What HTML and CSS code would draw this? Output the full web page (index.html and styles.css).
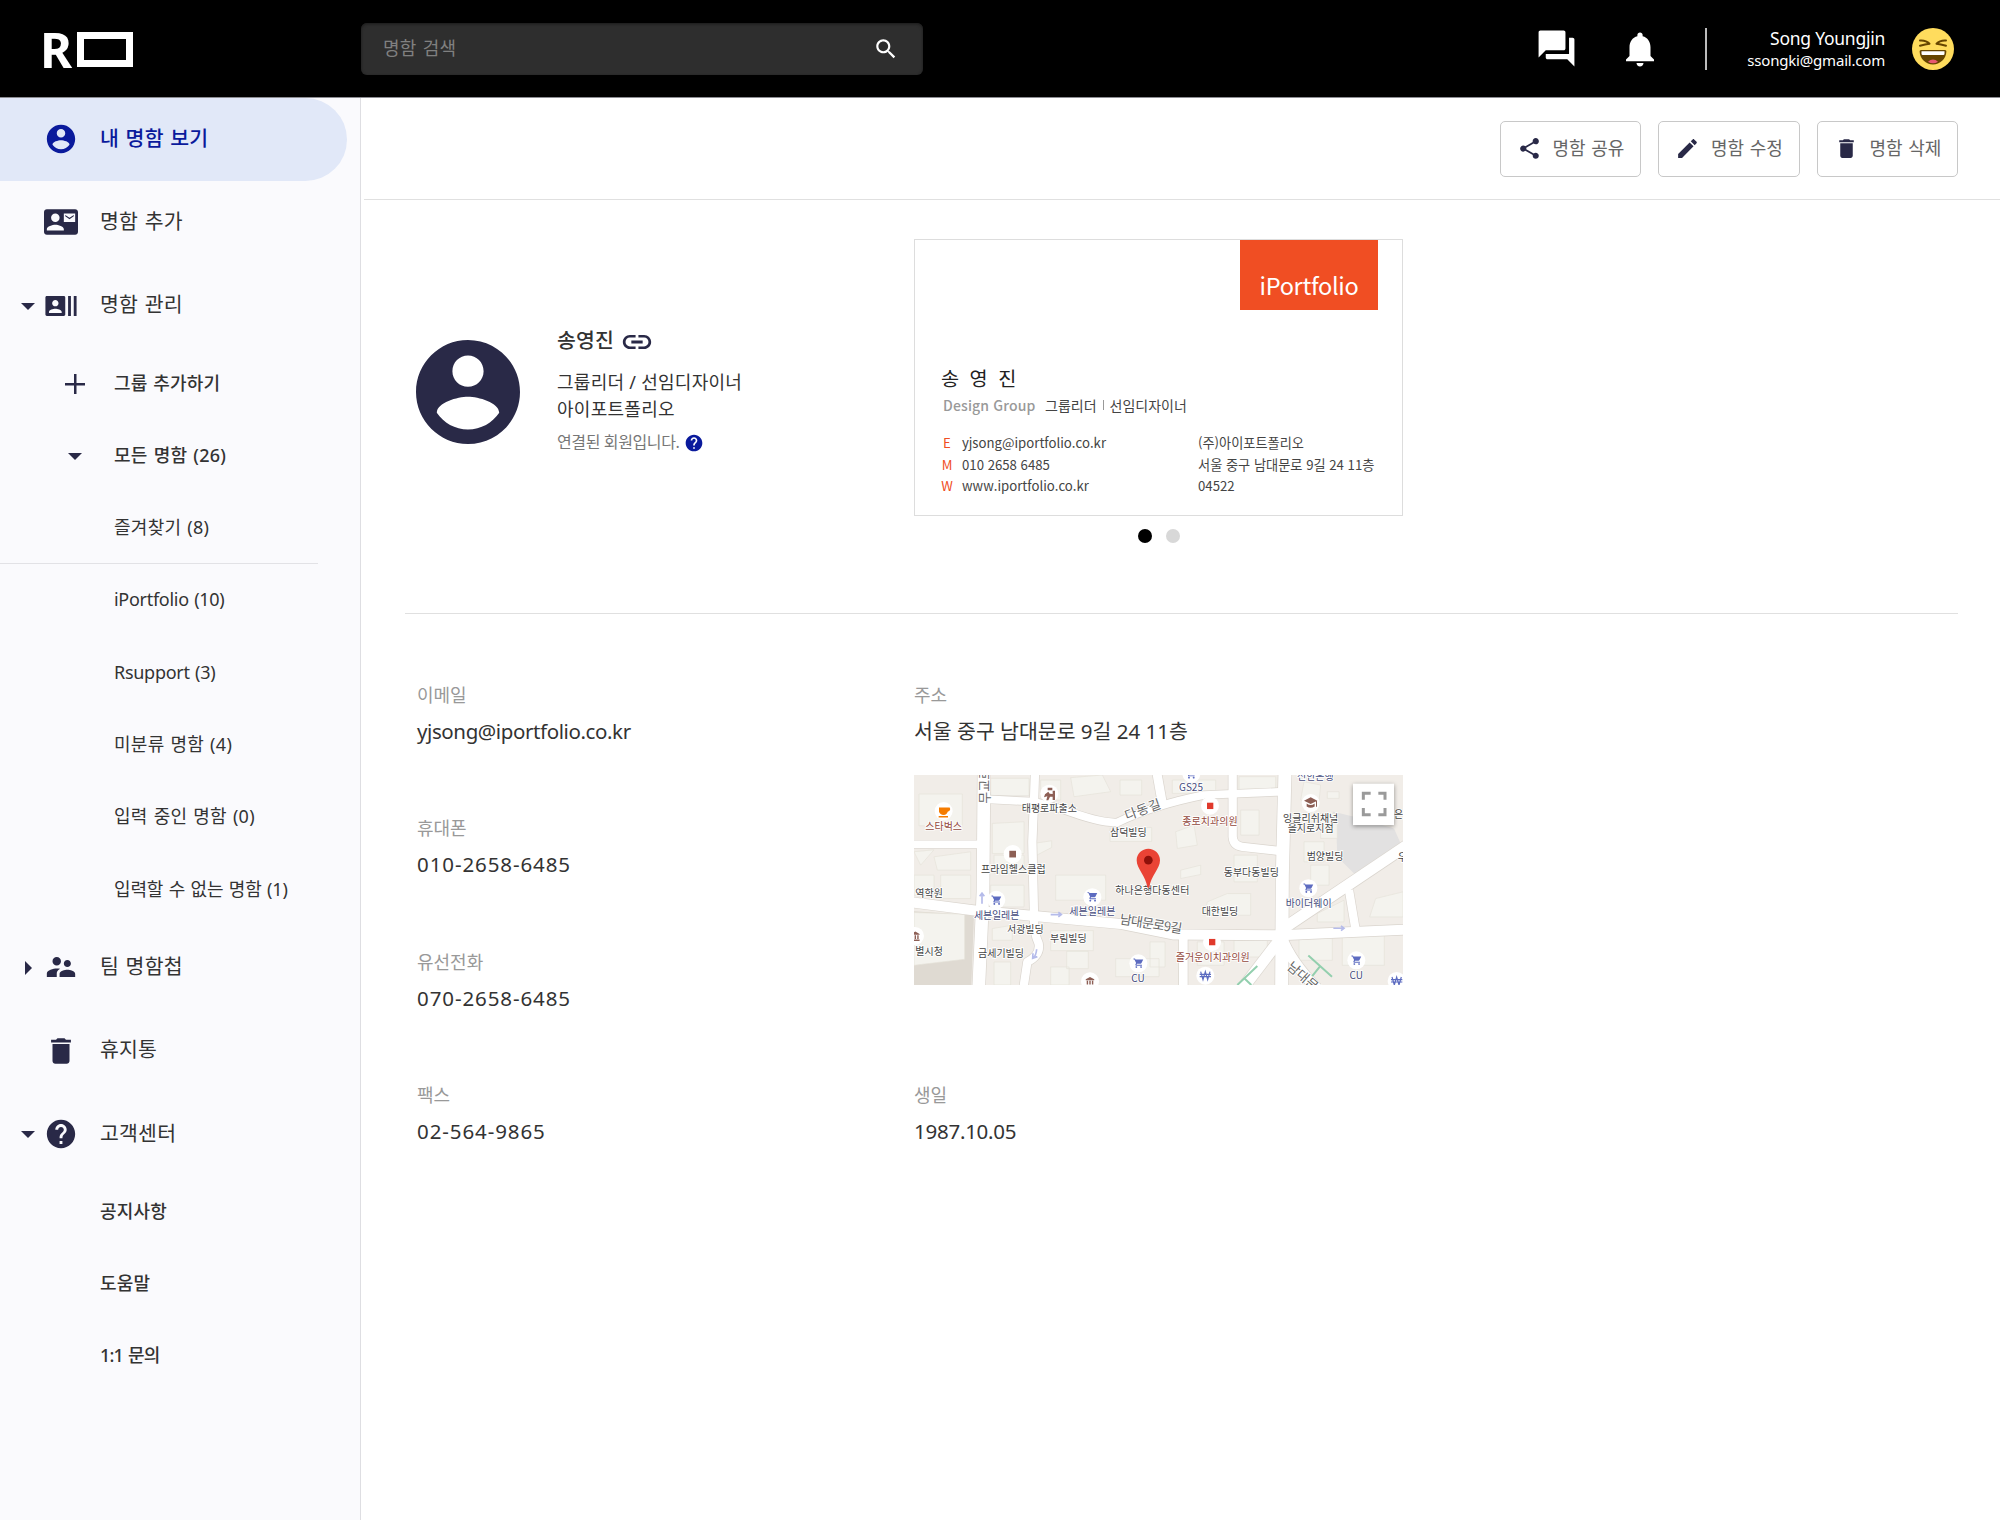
FILE: index.html
```html
<!DOCTYPE html>
<html lang="ko">
<head>
<meta charset="utf-8">
<title>내 명함 보기</title>
<link rel="stylesheet" href="styles.css">
</head>
<body>
<svg class="defs" width="0" height="0">
  <symbol id="i-account" viewBox="0 0 24 24"><path d="M12 2C6.48 2 2 6.48 2 12s4.480 10 10 10 10-4.480 10-10S17.520 2 12 2zm0 3c1.660 0 3 1.340 3 3s-1.340 3-3 3-3-1.340-3-3 1.340-3 3-3zm0 14.200c-2.500 0-4.710-1.280-6-3.220.03-1.990 4-3.080 6-3.080 1.990 0 5.970 1.090 6 3.080-1.290 1.940-3.500 3.220-6 3.220z"/></symbol>
  <symbol id="i-contact-mail" viewBox="0 0 24 24"><path d="M21 8V7l-3 2-3-2v1l3 2 3-2zm1-5H2C.9 3 0 3.900 0 5v14c0 1.100.9 2 2 2h20c1.100 0 1.990-.9 1.990-2L24 5c0-1.100-.9-2-2-2zM8 6c1.660 0 3 1.340 3 3s-1.340 3-3 3-3-1.340-3-3 1.340-3 3-3zm6 12H2v-1c0-2 4-3.100 6-3.100s6 1.100 6 3.100v1zm8-6h-8V6h8v6z"/></symbol>
  <symbol id="i-recent" viewBox="0 0 24 24"><path d="M21 5v14h2V5h-2zm-4 14h2V5h-2v14zM14 5H2c-.55 0-1 .45-1 1v12c0 .55.45 1 1 1h12c.55 0 1-.45 1-1V6c0-.55-.45-1-1-1zM8 7.750c1.240 0 2.250 1.010 2.250 2.250S9.240 12.250 8 12.250 5.750 11.240 5.750 10 6.760 7.750 8 7.750zM12.500 17h-9v-.75c0-1.500 3-2.250 4.500-2.250s4.500.75 4.500 2.250V17z"/></symbol>
  <symbol id="i-group" viewBox="0 0 24 24"><path d="M16.500 12c1.380 0 2.490-1.120 2.490-2.500S17.880 7 16.500 7C15.120 7 14 8.120 14 9.500s1.120 2.500 2.500 2.500zM9 11c1.660 0 2.990-1.340 2.990-3S10.660 5 9 5C7.340 5 6 6.340 6 8s1.340 3 3 3zm7.500 3c-1.830 0-5.500.92-5.500 2.750V19h11v-2.250c0-1.830-3.670-2.750-5.500-2.750zM9 13c-2.330 0-7 1.170-7 3.500V19h7v-2.250c0-.85.33-2.340 2.370-3.470C10.500 13.100 9.660 13 9 13z"/></symbol>
  <symbol id="i-trash" viewBox="0 0 24 24"><path d="M6 19c0 1.100.9 2 2 2h8c1.100 0 2-.9 2-2V7H6v12zM19 4h-3.500l-1-1h-5l-1 1H5v2h14V4z"/></symbol>
  <symbol id="i-help" viewBox="0 0 24 24"><path d="M12 2C6.480 2 2 6.480 2 12s4.480 10 10 10 10-4.480 10-10S17.520 2 12 2zm1 17h-2v-2h2v2zm2.070-7.750l-.9.920C13.450 12.900 13 13.500 13 15h-2v-.5c0-1.100.45-2.100 1.170-2.830l1.240-1.260c.37-.36.59-.86.59-1.410 0-1.100-.9-2-2-2s-2 .9-2 2H8c0-2.210 1.790-4 4-4s4 1.790 4 4c0 .88-.36 1.680-.93 2.250z"/></symbol>
  <symbol id="i-search" viewBox="0 0 24 24"><path d="M15.500 14h-.79l-.28-.27C15.410 12.590 16 11.110 16 9.500 16 5.910 13.090 3 9.500 3S3 5.910 3 9.500 5.910 16 9.500 16c1.610 0 3.090-.59 4.230-1.570l.27.28v.79l5 4.990L20.490 19l-4.990-5zm-6 0C7.010 14 5 11.990 5 9.500S7.010 5 9.500 5 14 7.010 14 9.500 11.990 14 9.500 14z"/></symbol>
  <symbol id="i-forum" viewBox="0 0 24 24"><path d="M21 6h-2v9H6v2c0 .55.45 1 1 1h11l4 4V7c0-.55-.45-1-1-1zm-4 6V3c0-.55-.45-1-1-1H3c-.55 0-1 .45-1 1v14l4-4h10c.55 0 1-.45 1-1z"/></symbol>
  <symbol id="i-bell" viewBox="0 0 24 24"><path d="M12 22c1.100 0 2-.9 2-2h-4c0 1.100.89 2 2 2zm6-6v-5c0-3.070-1.640-5.640-4.500-6.320V4c0-.83-.67-1.500-1.500-1.500s-1.500.67-1.500 1.500v.68C7.630 5.360 6 7.920 6 11v5l-2 2v1h16v-1l-2-2z"/></symbol>
  <symbol id="i-share" viewBox="0 0 24 24"><path d="M18 16.080c-.76 0-1.440.3-1.960.77L8.910 12.700c.05-.23.09-.46.09-.7s-.04-.47-.09-.7l7.050-4.110c.54.5 1.250.81 2.040.81 1.660 0 3-1.340 3-3s-1.340-3-3-3-3 1.340-3 3c0 .24.04.47.09.7L8.040 9.810C7.500 9.310 6.790 9 6 9c-1.660 0-3 1.340-3 3s1.340 3 3 3c.79 0 1.500-.31 2.040-.81l7.120 4.160c-.05.21-.08.43-.08.65 0 1.610 1.310 2.920 2.920 2.920s2.920-1.310 2.920-2.920-1.310-2.920-2.920-2.920z"/></symbol>
  <symbol id="i-edit" viewBox="0 0 24 24"><path d="M3 17.250V21h3.750L17.810 9.940l-3.750-3.750L3 17.250zM20.710 7.040c.39-.39.39-1.020 0-1.410l-2.340-2.340c-.39-.39-1.020-.39-1.410 0l-1.830 1.830 3.750 3.750 1.830-1.830z"/></symbol>
  <symbol id="i-link" viewBox="0 0 24 24"><path d="M3.900 12c0-1.710 1.390-3.100 3.100-3.100h4V7H7c-2.760 0-5 2.240-5 5s2.240 5 5 5h4v-1.900H7c-1.710 0-3.100-1.390-3.100-3.100zM8 13h8v-2H8v2zm9-6h-4v1.900h4c1.710 0 3.100 1.390 3.100 3.100s-1.390 3.100-3.100 3.100h-4V17h4c2.760 0 5-2.240 5-5s-2.240-5-5-5z"/></symbol>
  <symbol id="i-cart" viewBox="0 0 24 24"><path d="M7 18c-1.100 0-1.990.9-1.990 2S5.900 22 7 22s2-.9 2-2-.9-2-2-2zM1 2v2h2l3.600 7.590-1.350 2.450C4.500 15.400 5.500 17 7 17h12v-2H7.420l1.130-2h7.450c.75 0 1.410-.41 1.750-1.030L21.700 4H5.210l-.94-2H1zm16 16c-1.100 0-1.990.9-1.990 2s.89 2 1.990 2 2-.9 2-2-.9-2-2-2z"/></symbol>
  <symbol id="i-bank" viewBox="0 0 24 24"><path d="M12 2L3 7v2h18V7zM5 10h3v8H5zM10.500 10h3v8h-3zM16 10h3v8h-3zM3 19h18v3H3z"/></symbol>
</svg>

<header class="topbar">
  <a class="logo"><span class="logo-r">R</span><span class="logo-card"></span></a>
  <div class="search"><span>명함 검색</span><svg class="ic"><use href="#i-search"/></svg></div>
  <div class="top-actions">
    <svg class="ic forum"><use href="#i-forum"/></svg>
    <svg class="ic bell"><use href="#i-bell"/></svg>
    <span class="bar"></span>
    <div class="user"><span class="user-name">Song Youngjin</span><span class="user-mail">ssongki@gmail.com</span></div>
    <svg class="avatar" viewBox="0 0 42 42">
      <circle cx="21" cy="21" r="21" fill="#ffdc5d"/>
      <path d="M9 22h24q1.500 0 1.400 1.500C34 31 28 36.500 21 36.500S8 31 7.600 23.500Q7.500 22 9 22z" fill="#664500"/>
      <path d="M9.500 23.300h23v2.500q0 1.200-1.200 1.200H10.700q-1.200 0-1.200-1.200z" fill="#fff"/>
      <path d="M16 33.800q5-4.500 10 0-5 3-10 0z" fill="#e75a70"/>
      <path d="M8 12.500q6-.5 9.500 3.200-4 .3-9.500 2M34 12.500q-6-.5-9.500 3.200 4 .3 9.500 2" fill="none" stroke="#664500" stroke-width="2" stroke-linecap="round" stroke-linejoin="round"/>
    </svg>
  </div>
</header>

<div class="body">
  <nav class="sidebar">
    <a class="item active"><span class="caret"></span><svg class="ic s34"><use href="#i-account"/></svg><span class="label">내 명함 보기</span></a>
    <a class="item"><span class="caret"></span><svg class="ic s34"><use href="#i-contact-mail"/></svg><span class="label">명함 추가</span></a>
    <a class="item"><span class="caret down"></span><svg class="ic s34"><use href="#i-recent"/></svg><span class="label">명함 관리</span></a>
    <a class="sub strong"><span class="lead plus"></span><span class="label">그룹 추가하기</span></a>
    <a class="sub strong"><span class="lead"><span class="caret down"></span></span><span class="label wide">모든 명함 (26)</span></a>
    <a class="sub"><span class="lead"></span><span class="label wide">즐겨찾기 (8)</span></a>
    <hr class="side-rule">
    <a class="sub"><span class="lead"></span><span class="label tight">iPortfolio (10)</span></a>
    <a class="sub"><span class="lead"></span><span class="label tight">Rsupport (3)</span></a>
    <a class="sub"><span class="lead"></span><span class="label wide">미분류 명함 (4)</span></a>
    <a class="sub"><span class="lead"></span><span class="label wide">입력 중인 명함 (0)</span></a>
    <a class="sub"><span class="lead"></span><span class="label snug">입력할 수 없는 명함 (1)</span></a>
    <a class="item"><span class="caret right"></span><svg class="ic s34"><use href="#i-group"/></svg><span class="label">팀 명함첩</span></a>
    <a class="item"><span class="caret"></span><svg class="ic s34"><use href="#i-trash"/></svg><span class="label">휴지통</span></a>
    <a class="item"><span class="caret down"></span><svg class="ic s34"><use href="#i-help"/></svg><span class="label">고객센터</span></a>
    <a class="sub flat"><span class="label">공지사항</span></a>
    <a class="sub flat"><span class="label">도움말</span></a>
    <a class="sub flat"><span class="label narrow">1:1 문의</span></a>
  </nav>

  <main class="main">
    <div class="toolbar">
      <button class="btn"><svg class="ic"><use href="#i-share"/></svg><span>명함 공유</span></button>
      <button class="btn"><svg class="ic"><use href="#i-edit"/></svg><span>명함 수정</span></button>
      <button class="btn"><svg class="ic"><use href="#i-trash"/></svg><span>명함 삭제</span></button>
    </div>

    <section class="overview">
      <div class="profile">
        <svg class="ic portrait" viewBox="2 2 20 20"><path d="M12 2C6.480 2 2 6.480 2 12s4.480 10 10 10 10-4.480 10-10S17.520 2 12 2zm0 3c1.660 0 3 1.340 3 3s-1.340 3-3 3-3-1.340-3-3 1.340-3 3-3zm0 14.200c-2.500 0-4.710-1.280-6-3.220.03-1.990 4-3.080 6-3.080 1.990 0 5.970 1.090 6 3.080-1.290 1.940-3.500 3.220-6 3.220z"/></svg>
        <div class="who">
          <div class="who-name"><span>송영진</span><svg class="ic link"><use href="#i-link"/></svg></div>
          <div class="who-role">그룹리더 / 선임디자이너<br>아이포트폴리오</div>
          <div class="who-state"><span>연결된 회원입니다.</span><svg class="ic help"><use href="#i-help"/></svg></div>
        </div>
      </div>
      <div class="card-col">
        <article class="card">
          <div class="brand">iPortfolio</div>
          <div class="card-name">송 영 진</div>
          <div class="card-role"><span class="team">Design Group</span><span class="kr">그룹리더</span><i></i><span class="kr">선임디자이너</span></div>
          <div class="card-info">
            <b>E</b><span>yjsong@iportfolio.co.kr</span><span>(주)아이포트폴리오</span>
            <b>M</b><span>010 2658 6485</span><span>서울 중구 남대문로 9길 24 11층</span>
            <b>W</b><span>www.iportfolio.co.kr</span><span>04522</span>
          </div>
        </article>
        <div class="dots"><i class="on"></i><i></i></div>
      </div>
    </section>

    <section class="details">
      <div class="col">
        <div class="field"><span class="k">이메일</span><span class="v mail">yjsong@iportfolio.co.kr</span></div>
        <div class="field"><span class="k">휴대폰</span><span class="v phone">010-2658-6485</span></div>
        <div class="field"><span class="k">유선전화</span><span class="v phone">070-2658-6485</span></div>
        <div class="field"><span class="k">팩스</span><span class="v phone">02-564-9865</span></div>
      </div>
      <div class="col">
        <div class="field address"><span class="k">주소</span><span class="v">서울 중구 남대문로 9길 24 11층</span>
          <svg class="map" viewBox="0 0 1467 629" preserveAspectRatio="none">
            <rect width="1467" height="629" fill="#f1ede8"/>
            <path d="M0 408L180 420L172 629H0z" fill="#dfdad2"/>
            <path d="M1256 109L1320 125L1440 160L1460 205L1330 305L1270 245L1267 165z" fill="#e2e1e1"/>
            <g class="bld">
              <path d="M15 57h130v95H15zM0 412l152 5v135L0 570zM230 10h115v52H230zM380 15h60v60h-60zM470 8l95-8 25 50-110 15zM618 15h65v45h-65zM235 145l95-5v95h-95zM240 240h90v55h-90zM358 205l55-8v20l-48 25zM425 300h150v75H425zM588 160l125-3v42H588zM230 330h100v65H230zM60 245l110-15v55H70zM0 300h60v60H0zM80 300h90v70H80zM0 230l60-6L20 270zM410 466h128v60H410zM458 528h65v52h-65zM235 460l60-10v45h-60zM240 560h50v69h-50zM410 575h55v54h-55zM605 550h130v54H605zM775 15h130v40H775zM975 5h110v38H975zM980 105h55v75h-55zM785 170l55-20 10 60-60 10zM800 285l60-15v28l-60 12zM960 240h70v80h-70zM880 380l60-25h70v65H870zM708 500h45v75h-45zM850 500h80v70H850zM960 495h100v50H960zM1170 20l50 10-5 50-55-5zM1220 115h50v75h-50zM1170 200h60v60h-60zM1190 270h55v60h-55zM1240 50h35v20h-35zM1385 370l82-20v75h-100zM1285 480h126v90h-126zM1155 485h100v70h-100zM1210 415l80-40v65h-80z"/>
            </g>
            <g class="casing">
              <path d="M210-10L207 350L194 640" stroke-width="42"/><path d="M363-10L360 80L355 200L360 420Q358 470 374 505Q380 540 340 560L328 640" stroke-width="29"/>
              <path d="M225 73L360 80L450 104Q560 145 610 142Q720 90 870 60L1108 50" stroke-width="27"/><path d="M728-10L745 85" stroke-width="31"/>
              <path d="M-10 208H200" stroke-width="27"/><path d="M-10 381L200 408L360 422L620 446L780 478L1100 480L1480 463" stroke-width="34"/>
              <path d="M956-10V185Q958 212 985 215L1100 228" stroke-width="29"/><path d="M1113-10L1105 300L1103 640" stroke-width="43"/>
              <path d="M1115 455L1480 210" stroke-width="38"/><path d="M1305 345L1325 465" stroke-width="29"/><path d="M808 480V640" stroke-width="30"/>
              <path d="M1100 490L985 640" stroke-width="38"/><path d="M1100 480Q1130 560 1210 640" stroke-width="36"/>
            </g>
            <g class="road">
              <path d="M210-10L207 350L194 640" stroke-width="38"/><path d="M363-10L360 80L355 200L360 420Q358 470 374 505Q380 540 340 560L328 640" stroke-width="25"/>
              <path d="M225 73L360 80L450 104Q560 145 610 142Q720 90 870 60L1108 50" stroke-width="23"/><path d="M728-10L745 85" stroke-width="27"/>
              <path d="M-10 208H200" stroke-width="23"/><path d="M-10 381L200 408L360 422L620 446L780 478L1100 480L1480 463" stroke-width="30"/>
              <path d="M956-10V185Q958 212 985 215L1100 228" stroke-width="25"/><path d="M1113-10L1105 300L1103 640" stroke-width="39"/>
              <path d="M1115 455L1480 210" stroke-width="34"/><path d="M1305 345L1325 465" stroke-width="25"/><path d="M808 480V640" stroke-width="26"/>
              <path d="M1100 490L985 640" stroke-width="34"/><path d="M1100 480Q1130 560 1210 640" stroke-width="32"/>
            </g>
            <path d="M204 386v-32m-7 9l7-9 7 9M410 418h32m-9-7l9 7-9 7M368 522q-2 20-10 25m-1-13l-1 15 14-5M1258 459h32m-9-7l9 7-9 7" fill="none" stroke="#b5bbea" stroke-width="5"/>
            <path d="M970 629L1030 572M990 608L1012 629M1183 541L1254 604M1218 573L1194 603" fill="none" stroke="#93cfae" stroke-width="6"/>
            <g fill="#fff"><circle cx="89" cy="108" r="27"/><circle cx="406" cy="56" r="27"/><circle cx="296" cy="237" r="27"/><circle cx="247" cy="374" r="27"/><circle cx="535" cy="366" r="27"/><circle cx="3" cy="482" r="27"/><circle cx="673" cy="564" r="27"/><circle cx="528" cy="618" r="27"/><circle cx="832" cy="-4" r="27"/><circle cx="888" cy="92" r="27"/><circle cx="1190" cy="84" r="27"/><circle cx="1183" cy="339" r="27"/><circle cx="1327" cy="555" r="27"/><circle cx="894" cy="500" r="27"/><circle cx="874" cy="601" r="27"/><circle cx="1448" cy="617" r="27"/></g>
            <path d="M75 97h32q5 9-6 13-2 9-12 10-11-1-14-10zM74 123h28v4H74z" fill="#f57c00"/>
            <g fill="#8d5f55"><rect x="286" y="227" width="20" height="20"/><path d="M401 38h14v8h-14zM393 58l10-8 4 6 9 1V47h7v28h-7V65h-8l-5 11h-6l3-12-10 3z"/><path d="M1190 67l20 10-20 10-20-10zM1178 85q12 9 24 0v9q-12 8-24 0zM1206 78h3v17h-3z"/><use href="#i-bank" x="-13" y="466" width="34" height="34"/><use href="#i-bank" x="511" y="602" width="34" height="34"/></g>
            <g fill="#e0392b"><rect x="879" y="83" width="19" height="19"/><rect x="885" y="491" width="19" height="19"/></g>
            <g fill="#5c6bc0"><use href="#i-cart" x="230" y="358" width="36" height="34"/><use href="#i-cart" x="518" y="348" width="36" height="34"/><use href="#i-cart" x="656" y="547" width="36" height="34"/><use href="#i-cart" x="814" y="-20" width="36" height="34"/><use href="#i-cart" x="1166" y="322" width="36" height="34"/><use href="#i-cart" x="1310" y="538" width="36" height="34"/></g>
            <path class="won" d="M860 589l7 24 7-24 7 24 7-24M857 597h34M857 604h34M1434 605l7 24 7-24 7 24 7-24M1431 613h34M1431 620h34"/>
            <g class="place">
              <text x="406" y="112" textLength="166">태평로파출소</text><text x="643" y="183" textLength="110">삼덕빌딩</text><text x="298" y="294" textLength="194">프라임헬스클럽</text>
              <text class="from" x="4" y="365">역학원</text><text x="715" y="356" textLength="222">하나은행다동센터</text><text x="334" y="474" textLength="110">서광빌딩</text><text x="463" y="501" textLength="110">부림빌딩</text><text x="261" y="546" textLength="138">금세기빌딩</text>
              <text class="from" x="4" y="539">별시청</text><text x="1012" y="302" textLength="166">동부다동빌딩</text><text x="918" y="419" textLength="110">대한빌딩</text><text x="1233" y="255" textLength="110">범양빌딩</text>
              <text x="1190" y="141" textLength="166">잉글리쉬채널</text><text x="1190" y="171" textLength="138">을지로지점</text><text x="1454" y="130">은</text><text x="1465" y="257">우</text>
            </g>
            <g class="place food"><text x="89" y="166" textLength="110">스타벅스</text><text x="888" y="150" textLength="166">종로치과의원</text><text x="896" y="556" textLength="222">즐거운이치과의원</text></g>
            <g class="place shop"><text x="248" y="431" textLength="136">세븐일레븐</text><text x="535" y="420" textLength="138">세븐일레븐</text><text x="672" y="621">CU</text><text x="831" y="49">GS25</text><text x="1184" y="394" textLength="138">바이더웨이</text><text x="1327" y="611">CU</text><text x="1204" y="15" textLength="110">신한은행</text></g>
            <g class="street"><text transform="translate(638 136) rotate(-20)" textLength="112">다동길</text><text transform="translate(616 445) rotate(9)" textLength="188">남대문로9길</text><text transform="translate(1117 578) rotate(41)">남대문로</text><text transform="translate(224 86) rotate(-90)">무교로</text></g>
            <path d="M703 221c19 0 35 15 35 34 0 26-28 46-32 82h-6c-4-36-32-56-32-82 0-19 16-34 35-34z" fill="#ea4335"/><circle cx="703" cy="255" r="13" fill="#8e100a"/>
            <g class="fs"><rect x="1317" y="26" width="123" height="124" fill="#fff"/></g>
            <path d="M1348 74V55h22M1393 55h20v19M1413 99v20h-20M1370 119h-22V99" fill="none" stroke="#9a9a9a" stroke-width="9"/>
          </svg>
        </div>
        <div class="field"><span class="k">생일</span><span class="v date">1987.10.05</span></div>
      </div>
    </section>
  </main>
</div>
</body>
</html>
```
FILE: styles.css
```css
* { box-sizing: border-box; }
body {
  margin: 0; width: 2000px; height: 1520px; overflow: hidden; background: #fff; color: #333;
  font-family: "Noto Sans", "Noto Sans CJK KR", sans-serif;
  display: flex; flex-direction: column;
}
.defs { position: absolute; }
.ic { fill: #292947; display: block; flex: none; }

/* top bar */
.topbar { height: 98px; flex: none; background: #000; border-bottom: 1px solid #8c8c92; display: flex; align-items: center; padding: 0 46px 0 40px; color: #fff; }
.logo { display: flex; align-items: center; width: 321px; height: 36px; }
.logo-r { font: 700 49px/36px "Noto Sans"; width: 37px; }
.logo-card { width: 56px; height: 35px; border: 7px solid #fff; margin-top: 1px; }
.search { width: 562px; height: 52px; border-radius: 6px; background: #2e2e2e; box-shadow: inset 0 1px 3px #1a1a1a; display: flex; align-items: center; justify-content: space-between; padding: 0 24px 0 22px; color: #808080; font-size: 18px; }
.search .ic { width: 26px; height: 26px; fill: #fff; }
.search span { line-height: 26px; word-spacing: 1.500px; letter-spacing: .15px; margin-top: -1px; }
.top-actions { margin-left: auto; display: flex; align-items: center; }
.top-actions .ic { fill: #fff; }
.forum { width: 43px; height: 43px; margin-right: 41px; }
.bell { width: 42px; height: 42px; margin-right: 44px; }
.bar { width: 2px; height: 42px; background: #bbb; margin-right: 40px; }
.user { display: flex; flex-direction: column; align-items: flex-end; width: 138px; margin-right: 27px; }
.user-name { font-size: 17.500px; line-height: 23px; letter-spacing: -.25px; }
.user-mail { font-size: 15px; line-height: 20px; letter-spacing: -.2px; }
.avatar { width: 42px; height: 42px; }

.body { flex: 1; display: flex; min-height: 0; }

/* sidebar */
.sidebar { width: 361px; flex: none; background: #fafafd; border-right: 1px solid #dedee2; display: flex; flex-direction: column; }
.item { height: 83.300px; flex: none; display: flex; align-items: center; padding-left: 21px; color: #333; font-size: 20.500px; }
.item .label { line-height: 30px; margin: -4px 0 0 22px; word-spacing: 1px; letter-spacing: .2px; }
.item .ic { margin: -1px 0 0 9px; }
.s34 { width: 34px; height: 34px; }
.active { width: 347px; background: #e1e8f8; border-radius: 0 42px 42px 0; color: #0a1a9c; font-weight: 500; }
.active .ic { fill: #0a1a9c; }
.caret { width: 14px; height: 14px; flex: none; display: flex; align-items: center; justify-content: center; }
.caret.down::before { content: ""; border: 7px solid transparent; border-top-color: #292947; border-bottom: 0; }
.caret.right::before { content: ""; border: 7px solid transparent; border-left-color: #292947; border-right: 0; }
.sub { height: 72.300px; flex: none; display: flex; align-items: center; padding-left: 60px; font-size: 18px; color: #333; }
.sub .label { line-height: 26px; margin-top: -3px; word-spacing: 1px; letter-spacing: .15px; }
.sub .wide { letter-spacing: .28px; }
.sub .tight { letter-spacing: -.28px; }
.sub .snug { letter-spacing: -.18px; }
.sub .narrow { letter-spacing: -.8px; }
.strong, .flat { font-weight: 500; }
.flat { padding-left: 100px; }
.lead { width: 54px; display: flex; padding-left: 8px; }
.plus { height: 20px; margin-left: 5px; width: 49px; background: linear-gradient(#292947, #292947) 0 50% / 20px 2.500px no-repeat, linear-gradient(#292947, #292947) 8.700px 50% / 2.500px 20px no-repeat; }
.side-rule { width: 318px; height: 1px; flex: none; border: 0; margin: -2px 0 1px; background: #e2e2e6; }

/* main */
.main { flex: 1; padding: 0 42px 0 44px; }
.toolbar { height: 102px; margin: 0 -42px 0 -41px; padding-right: 42px; border-bottom: 1px solid #e0e0e0; display: flex; align-items: center; justify-content: flex-end; gap: 17px; }
.btn { width: 141.500px; height: 56px; padding: 0 0 0 16px; background: #fff; border: 1px solid #c8c8c8; border-radius: 5px; display: flex; align-items: center; gap: 11px; font: 400 18px/26px "Noto Sans", "Noto Sans CJK KR", sans-serif; color: #666; }
.btn .ic { width: 25px; height: 25px; }
.btn span { word-spacing: 1px; margin-top: -2px; white-space: nowrap; }

.overview { display: flex; height: 414px; padding: 39px 0 0 11px; border-bottom: 1px solid #e0e0e0; }
.profile { width: 498px; flex: none; display: flex; padding-top: 85px; height: 300px; }
.portrait { width: 104px; height: 104px; margin: 16px 37px 0 0; }
.who-name { display: flex; align-items: center; font-size: 20.500px; font-weight: 500; line-height: 32px; height: 32px; letter-spacing: .2px; }
.link { width: 34px; height: 34px; margin: 3px 0 0 6px; }
.who-role { font-size: 18px; line-height: 26.500px; margin-top: 13px; letter-spacing: .27px; }
.who-state { display: flex; align-items: center; font-size: 16px; line-height: 24px; color: #777; margin-top: 8px; letter-spacing: -.38px; }
.help { width: 20px; height: 20px; fill: #0a1a9c; margin: 2px 0 0 5px; }

.card { width: 489px; height: 277px; border: 1px solid #ddd; padding: 0 24px 0 26px; font-family: "Noto Sans CJK KR", sans-serif; display: flex; flex-direction: column; }
.brand { width: 138px; height: 70px; background: #f04e23; color: #fff; align-self: flex-end; text-align: center; font-size: 23.500px; line-height: 91px; letter-spacing: -.3px; }
.card-name { font-size: 19.700px; line-height: 30px; margin: 53px 0 0; color: #222; word-spacing: 5px; }
.card-role { display: flex; align-items: center; font-size: 14px; line-height: 24px; padding-left: 2px; color: #444; }
.team { color: #999; letter-spacing: .15px; width: 102px; font-weight: 500; }
.card-role i { width: 1px; height: 10px; background: #999; margin: 0 6px; }
.card-info { display: grid; grid-template-columns: 21px 236px auto; grid-auto-rows: 21.600px; margin-top: 15px; font-size: 13.200px; line-height: 21.600px; color: #444; white-space: nowrap; }
.card-info b { font-weight: 400; color: #f04e23; width: 12px; text-align: center; }
.dots { display: flex; gap: 14px; justify-content: center; margin-top: 13px; width: 489px; }
.dots i { width: 14px; height: 14px; border-radius: 50%; background: #d8d8d8; }
.dots .on { background: #000; }

.details { display: flex; padding: 68px 0 0 12px; }
.col { width: 497px; }
.field { height: 133.300px; display: flex; flex-direction: column; align-items: flex-start; }
.k { font-size: 18px; line-height: 26px; color: #999; }
.v { font-size: 20.500px; line-height: 30px; margin-top: 8px; color: #333; }
.mail { letter-spacing: -.4px; }
.phone { letter-spacing: .9px; }
.date { letter-spacing: -.25px; }
.address { height: 399.900px; }
.map { width: 489px; height: 210px; margin-top: 29px; display: block; flex: none; }
.bld path { fill: #f4f3ee; stroke: #e6e3da; stroke-width: 2; }
.casing, .road { fill: none; stroke: #dad5ce; stroke-linejoin: round; }
.road { stroke: #fff; }
.place { font-size: 30px; fill: #444; text-anchor: middle; paint-order: stroke; stroke: #fff; stroke-width: 5px; font-family: "Noto Sans CJK KR", sans-serif; }
.place .from { text-anchor: start; }
.food { fill: #93483c; }
.shop { fill: #444b7c; }
.won { fill: none; stroke: #5c6bc0; stroke-width: 3.500px; }
.street { font: 400 39px "Noto Sans CJK KR", sans-serif; fill: #666; paint-order: stroke; stroke: #fff; stroke-width: 5px; }
.fs { filter: drop-shadow(0 4px 6px rgba(0, 0, 0, .4)); }
```
